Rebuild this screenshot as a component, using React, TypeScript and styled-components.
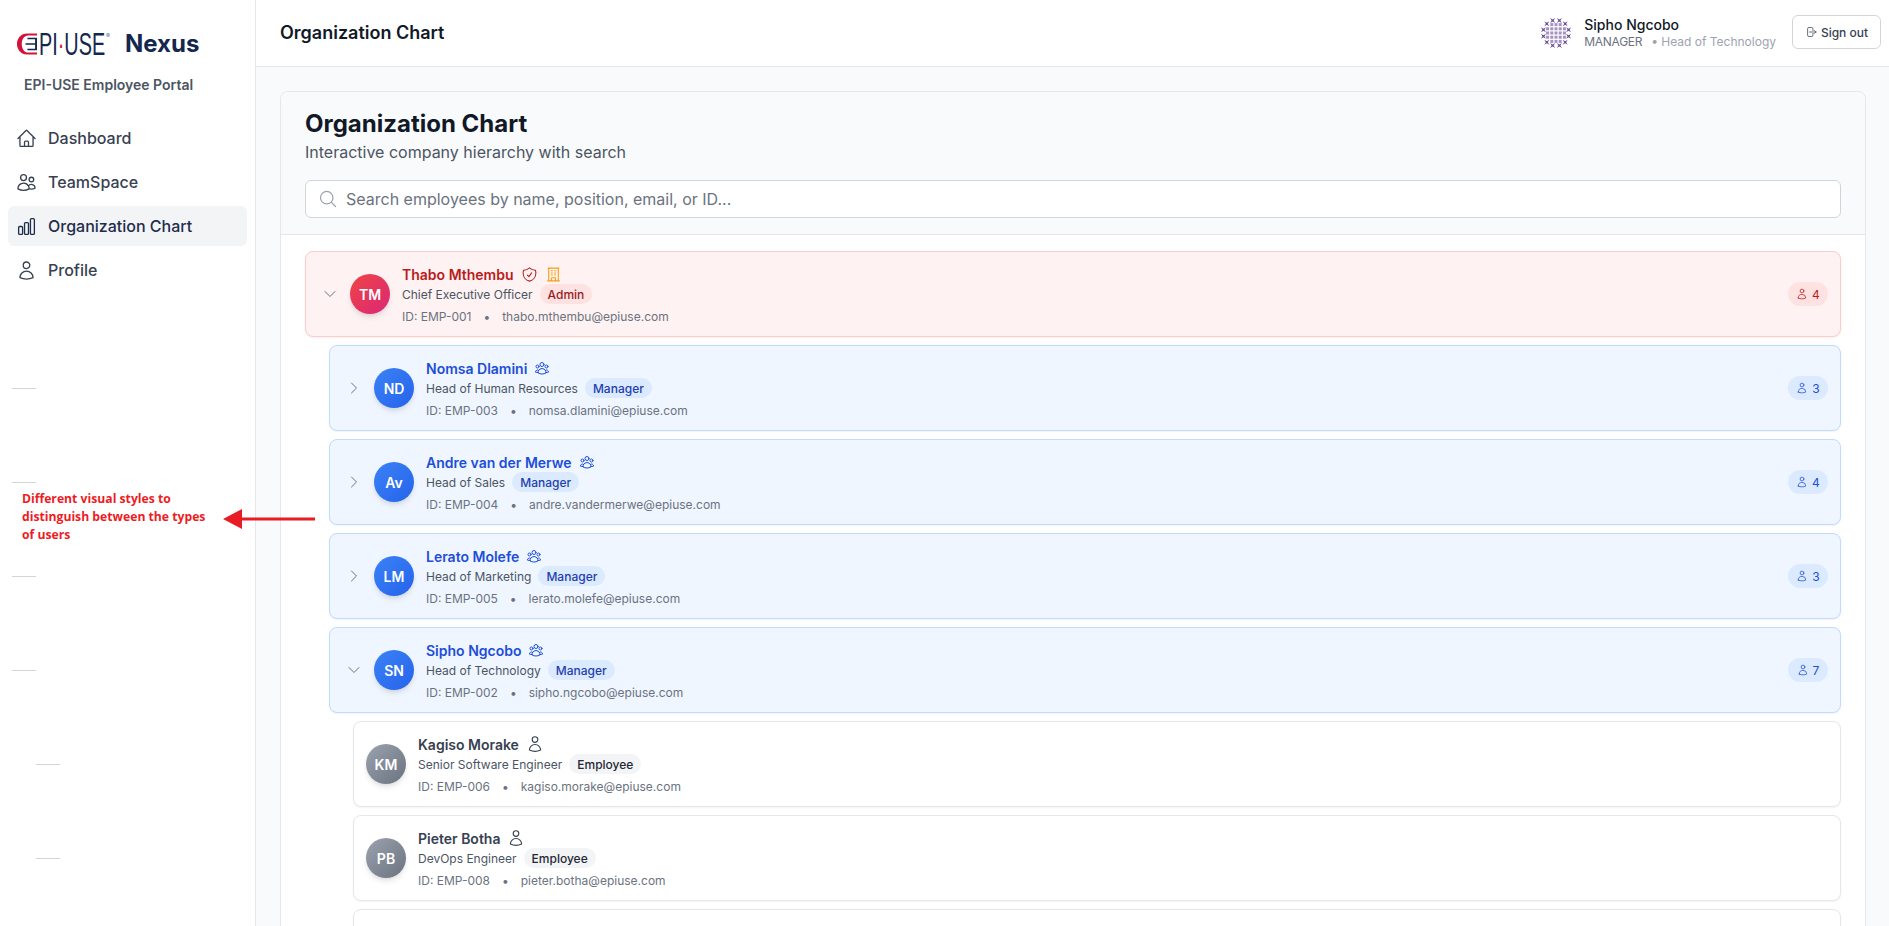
import styled, { createGlobalStyle } from "styled-components";
import {
  HiOutlineArrowRightOnRectangle,
  HiOutlineBuildingOffice,
  HiOutlineChartBar,
  HiOutlineChevronDown,
  HiOutlineChevronRight,
  HiOutlineHome,
  HiOutlineMagnifyingGlass,
  HiOutlineShieldCheck,
  HiOutlineUser,
  HiOutlineUserGroup,
  HiOutlineUsers,
} from "react-icons/hi2";

type Role = "admin" | "manager" | "employee";

interface Person {
  initials: string;
  name: string;
  title: string;
  id: string;
  email: string;
  role: Role;
  depth: number;
  expanded?: boolean;
  reports?: number;
}

const people: Person[] = [
  { initials: "TM", name: "Thabo Mthembu", title: "Chief Executive Officer", id: "EMP-001", email: "thabo.mthembu@epiuse.com", role: "admin", depth: 0, expanded: true, reports: 4 },
  { initials: "ND", name: "Nomsa Dlamini", title: "Head of Human Resources", id: "EMP-003", email: "nomsa.dlamini@epiuse.com", role: "manager", depth: 1, reports: 3 },
  { initials: "Av", name: "Andre van der Merwe", title: "Head of Sales", id: "EMP-004", email: "andre.vandermerwe@epiuse.com", role: "manager", depth: 1, reports: 4 },
  { initials: "LM", name: "Lerato Molefe", title: "Head of Marketing", id: "EMP-005", email: "lerato.molefe@epiuse.com", role: "manager", depth: 1, reports: 3 },
  { initials: "SN", name: "Sipho Ngcobo", title: "Head of Technology", id: "EMP-002", email: "sipho.ngcobo@epiuse.com", role: "manager", depth: 1, expanded: true, reports: 7 },
  { initials: "KM", name: "Kagiso Morake", title: "Senior Software Engineer", id: "EMP-006", email: "kagiso.morake@epiuse.com", role: "employee", depth: 2 },
  { initials: "PB", name: "Pieter Botha", title: "DevOps Engineer", id: "EMP-008", email: "pieter.botha@epiuse.com", role: "employee", depth: 2 },
  { initials: "", name: "", title: "", id: "EMP-009", email: "", role: "employee", depth: 2 },
];

const roleLabel = { admin: "Admin", manager: "Manager", employee: "Employee" };

const palette = {
  admin: { bg: "#fef2f2", border: "#fecaca", name: "#b91c1c", badgeBg: "#fee2e2", badgeText: "#991b1b", avatar: "linear-gradient(135deg, #ef4444, #db2777)", count: "#b91c1c" },
  manager: { bg: "#eff6ff", border: "#bfdbfe", name: "#1d4ed8", badgeBg: "#dbeafe", badgeText: "#1e40af", avatar: "linear-gradient(135deg, #3b82f6, #2563eb)", count: "#1d4ed8" },
  employee: { bg: "#ffffff", border: "#e5e7eb", name: "#374151", badgeBg: "#f3f4f6", badgeText: "#1f2937", avatar: "linear-gradient(135deg, #9ca3af, #6b7280)", count: "#374151" },
};

const connectorMarks = [
  { x: 12, y: 388 },
  { x: 12, y: 482 },
  { x: 12, y: 576 },
  { x: 12, y: 670 },
  { x: 36, y: 764 },
  { x: 36, y: 858 },
];

const GlobalStyle = createGlobalStyle`
  html, body {
    margin: 0;
    padding: 0;
    height: 100%;
    overflow: hidden;
  }
  body {
    font-family: Inter, "Liberation Sans", sans-serif;
    color: #111827;
    background: #fff;
  }
  * {
    box-sizing: border-box;
  }
`;

const Shell = styled.div`
  display: flex;
  height: 926px;
  overflow: hidden;
  position: relative;
`;

const Sidebar = styled.aside`
  width: 256px;
  flex-shrink: 0;
  background: #fff;
  border-right: 1px solid #e5e7eb;
  position: relative;
`;

const Brand = styled.div`
  height: 63px;
  padding: 24px 0 0 16px;
  display: flex;
  align-items: center;
  gap: 15px;
`;

const LogoMark = styled.div`
  display: flex;
  align-items: center;
  height: 24px;
  width: 94px;
  color: #14274e;
`;

const LogoLetters = styled.span`
  font-family: "Liberation Sans", sans-serif;
  font-weight: 400;
  font-size: 32px;
  line-height: 24px;
  transform: scaleX(0.62);
  transform-origin: left center;
  width: 67px;
  margin-left: 1px;
  white-space: nowrap;
`;

const LogoDot = styled.span`
  color: #d2143a;
`;

const LogoReg = styled.sup`
  font-size: 6px;
  line-height: 6px;
  align-self: flex-start;
  margin: 1px 0 0 0;
  color: #6b7280;
`;

const Nexus = styled.span`
  font-size: 24px;
  font-weight: 700;
  color: #14274e;
  line-height: 32px;
`;

const Tagline = styled.div`
  font-size: 14px;
  font-weight: 600;
  color: #4b5563;
  padding: 12px 0 0 24px;
  line-height: 20px;
`;

const Nav = styled.nav`
  display: flex;
  flex-direction: column;
  gap: 4px;
  padding: 23px 8px 0;
`;

const NavItem = styled.a<{ $active?: boolean }>`
  height: 40px;
  display: flex;
  align-items: center;
  gap: 11px;
  padding: 0 8px;
  border-radius: 6px;
  font-size: 16px;
  font-weight: 500;
  color: ${({ $active }) => ($active ? "#1f2d4d" : "#374151")};
  background: ${({ $active }) => ($active ? "#f3f4f6" : "transparent")};
`;

const Mark = styled.i`
  position: absolute;
  width: 24px;
  height: 1px;
  background: #d1d5db;
`;

const Annotation = styled.div`
  position: absolute;
  left: 22px;
  top: 490px;
  width: 190px;
  font-family: "Open Sans", sans-serif;
  font-size: 12.2px;
  font-weight: 700;
  line-height: 18px;
  color: #ed1c24;
`;

const ArrowDrawing = styled.svg`
  position: absolute;
  left: 222px;
  top: 508px;
`;

const Column = styled.div`
  flex: 1;
  min-width: 0;
  display: flex;
  flex-direction: column;
`;

const TopBar = styled.header`
  height: 67px;
  flex-shrink: 0;
  display: flex;
  align-items: center;
  justify-content: space-between;
  padding: 0 8px 0 24px;
  border-bottom: 1px solid #e5e7eb;
  background: #fff;
`;

const TopTitle = styled.h1`
  margin: 0 0 2px;
  font-size: 18px;
  font-weight: 600;
  color: #111827;
`;

const UserArea = styled.div`
  display: flex;
  align-items: center;
`;

const UserText = styled.div`
  margin-left: 12px;
  margin-right: 16px;
`;

const UserName = styled.div`
  font-size: 14px;
  font-weight: 500;
  line-height: 18px;
  color: #111827;
`;

const UserMeta = styled.div`
  font-size: 12px;
  line-height: 16px;
  color: #9ca3af;
  display: flex;
`;

const UserRole = styled.span`
  color: #6b7280;
  margin-right: 9px;
  letter-spacing: -0.3px;
`;

const SignOut = styled.button`
  height: 34px;
  width: 89px;
  margin-bottom: 2px;
  border: 1px solid #d1d5db;
  border-radius: 6px;
  background: #fff;
  display: flex;
  align-items: center;
  justify-content: center;
  gap: 4px;
  font-family: inherit;
  font-size: 12px;
  font-weight: 500;
  color: #374151;
`;

const Main = styled.main`
  flex: 1;
  background: #f9fafb;
  padding: 24px 23px 24px 24px;
  overflow: hidden;
`;

const Card = styled.section`
  background: #fff;
  border: 1px solid #e5e7eb;
  border-radius: 8px;
  min-height: 1000px;
`;

const CardHead = styled.div`
  background: #f9fafb;
  border-bottom: 1px solid #e5e7eb;
  border-radius: 8px 8px 0 0;
  padding: 16px 24px 16px;
`;

const CardTitle = styled.h2`
  margin: 0;
  font-size: 24px;
  font-weight: 700;
  line-height: 32px;
  color: #111827;
`;

const CardSub = styled.p`
  margin: 0 0 16px;
  font-size: 16px;
  line-height: 24px;
  color: #4b5563;
`;

const SearchBox = styled.div`
  height: 38px;
  border: 1px solid #d1d5db;
  border-radius: 6px;
  background: #fff;
  display: flex;
  align-items: center;
  gap: 8px;
  padding: 0 12px;
  font-size: 16px;
  color: #6b7280;
`;

const Tree = styled.div`
  display: flex;
  flex-direction: column;
  gap: 8px;
  padding: 16px 24px;
`;

const Row = styled.div<{ $role: Role; $depth: number }>`
  height: 86px;
  margin-left: ${({ $depth }) => $depth * 24}px;
  display: flex;
  align-items: center;
  border-radius: 8px;
  padding: 0 12px;
  background: ${({ $role }) => palette[$role].bg};
  border: 1px solid ${({ $role }) => palette[$role].border};
  box-shadow: 0 1px 2px rgba(0, 0, 0, 0.05);
`;

const Toggle = styled.span`
  width: 24px;
  height: 24px;
  display: flex;
  align-items: center;
  justify-content: center;
  margin-right: 8px;
  color: #6b7280;
`;

const Avatar = styled.div<{ $role: Role }>`
  width: 40px;
  height: 40px;
  border-radius: 50%;
  flex-shrink: 0;
  background: ${({ $role }) => palette[$role].avatar};
  color: #fff;
  font-size: 14px;
  font-weight: 600;
  display: flex;
  align-items: center;
  justify-content: center;
  box-shadow: 0 4px 6px -1px rgba(0, 0, 0, 0.1), 0 2px 4px -2px rgba(0, 0, 0, 0.1);
`;

const Info = styled.div`
  flex: 1;
  min-width: 0;
  margin-left: 12px;
  display: flex;
  flex-direction: column;
`;

const NameLine = styled.div`
  display: flex;
  align-items: center;
  gap: 7px;
  height: 20px;
  margin-top: 2px;
`;

const Name = styled.span<{ $role: Role }>`
  font-size: 14px;
  font-weight: 600;
  color: ${({ $role }) => palette[$role].name};
`;

const TitleLine = styled.div`
  display: flex;
  align-items: center;
  gap: 7px;
  height: 20px;
  font-size: 12px;
  color: #4b5563;
`;

const RoleBadge = styled.span<{ $role: Role }>`
  height: 20px;
  padding: 0 8px;
  border-radius: 10px;
  display: flex;
  align-items: center;
  font-weight: 500;
  background: ${({ $role }) => palette[$role].badgeBg};
  color: ${({ $role }) => palette[$role].badgeText};
`;

const MetaLine = styled.div`
  display: flex;
  align-items: center;
  gap: 12px;
  height: 20px;
  margin-top: 2px;
  font-size: 12px;
  color: #6b7280;
`;

const Count = styled.div<{ $role: Role }>`
  height: 24px;
  width: 40px;
  border-radius: 12px;
  display: flex;
  align-items: center;
  justify-content: center;
  gap: 4px;
  font-size: 12px;
  font-weight: 400;
  background: ${({ $role }) => palette[$role].badgeBg};
  color: ${({ $role }) => palette[$role].count};
`;

// round lattice next to the signed-in user: pale grid inside a ring of dark crosses
const UserAvatar = () => {
  const grid = [-2, -1, 0, 1, 2];
  const ring = Array.from({ length: 12 }, (_, i) => (i * Math.PI) / 6 + Math.PI / 12);
  return (
    <svg width="32" height="32" viewBox="-16 -16 32 32" fill="#6b4a9b">
      {grid.map((r) =>
        grid.map((c) =>
          Math.hypot(r, c) * 4.2 > 10 ? null : (
            <rect key={`${r}${c}`} x={c * 4.2 - 1.5} y={r * 4.2 - 1.5} width="3" height="3" opacity="0.6" />
          )
        )
      )}
      {ring.map((a) => {
        const x = Math.cos(a) * 13;
        const y = Math.sin(a) * 13;
        return <path key={a} d={`M${x - 2.500} ${y - 2.500}L${x} ${y - 1}L${x + 2.500} ${y - 2.500}L${x + 1} ${y}L${x + 2.500} ${y + 2.500}L${x} ${y + 1}L${x - 2.500} ${y + 2.500}L${x - 1} ${y}Z`} />;
      })}
    </svg>
  );
};

const PersonRow = ({ person }: { person: Person }) => {
  const { role, depth } = person;
  const color = palette[role].name;
  return (
    <Row $role={role} $depth={depth}>
      {role !== "employee" && (
        <Toggle>{person.expanded ? <HiOutlineChevronDown size={16} /> : <HiOutlineChevronRight size={16} />}</Toggle>
      )}
      {person.name && (
        <>
          <Avatar $role={role}>{person.initials}</Avatar>
          <Info>
            <NameLine>
              <Name $role={role}>{person.name}</Name>
              {role === "admin" && <HiOutlineShieldCheck size={17} color="#b91c1c" />}
              {role === "admin" && <HiOutlineBuildingOffice size={17} color="#f59e0b" />}
              {role === "manager" && <HiOutlineUserGroup size={16} color={color} />}
              {role === "employee" && <HiOutlineUser size={18} color={color} />}
            </NameLine>
            <TitleLine>
              {person.title}
              <RoleBadge $role={role}>{roleLabel[role]}</RoleBadge>
            </TitleLine>
            <MetaLine>
              <span>ID: {person.id}</span>
              <span>•</span>
              <span>{person.email}</span>
            </MetaLine>
          </Info>
        </>
      )}
      {person.reports && (
        <Count $role={role}>
          <HiOutlineUser size={12} />
          {person.reports}
        </Count>
      )}
    </Row>
  );
};

const App = () => (
  <>
    <GlobalStyle />
    <Shell>
      <Sidebar>
        <Brand>
          <LogoMark>
            <svg width="23" height="24" viewBox="0 0 23 24">
              <path d="M22 1H11.500C5.500 1 1 6 1 12s4.500 11 10.500 11H22v-2H13C8.500 21 6 17 6 12s2.500-9 7-9h9z" fill="#d2143a" />
              <path d="M12 5.500h10v13H12v-1.500h8v-4.200H10v-1.600h10V7h-8z" fill="#14274e" />
            </svg>
            <LogoLetters>
              PI<LogoDot>·</LogoDot>USE
            </LogoLetters>
            <LogoReg>®</LogoReg>
          </LogoMark>
          <Nexus>Nexus</Nexus>
        </Brand>
        <Tagline>EPI-USE Employee Portal</Tagline>
        <Nav>
          <NavItem><HiOutlineHome size={21} />Dashboard</NavItem>
          <NavItem><HiOutlineUsers size={21} />TeamSpace</NavItem>
          <NavItem $active><HiOutlineChartBar size={21} />Organization Chart</NavItem>
          <NavItem><HiOutlineUser size={21} />Profile</NavItem>
        </Nav>
        {connectorMarks.map((m) => (
          <Mark key={m.y} style={{ left: m.x, top: m.y }} />
        ))}
      </Sidebar>
      <Column>
        <TopBar>
          <TopTitle>Organization Chart</TopTitle>
          <UserArea>
            <UserAvatar />
            <UserText>
              <UserName>Sipho Ngcobo</UserName>
              <UserMeta>
                <UserRole>MANAGER</UserRole>• Head of Technology
              </UserMeta>
            </UserText>
            <SignOut><HiOutlineArrowRightOnRectangle size={12} />Sign out</SignOut>
          </UserArea>
        </TopBar>
        <Main>
          <Card>
            <CardHead>
              <CardTitle>Organization Chart</CardTitle>
              <CardSub>Interactive company hierarchy with search</CardSub>
              <SearchBox>
                <HiOutlineMagnifyingGlass size={20} color="#9ca3af" />
                Search employees by name, position, email, or ID...
              </SearchBox>
            </CardHead>
            <Tree>
              {people.map((p) => (
                <PersonRow key={p.id} person={p} />
              ))}
            </Tree>
          </Card>
        </Main>
      </Column>
      <Annotation>Different visual styles to distinguish between the types of users</Annotation>
      <ArrowDrawing width="94" height="24" viewBox="0 0 94 24">
        <path d="M93 9.500H20V1L1 11l19 10v-8.500h73z" fill="#e81c24" />
      </ArrowDrawing>
    </Shell>
  </>
);

export default App;
